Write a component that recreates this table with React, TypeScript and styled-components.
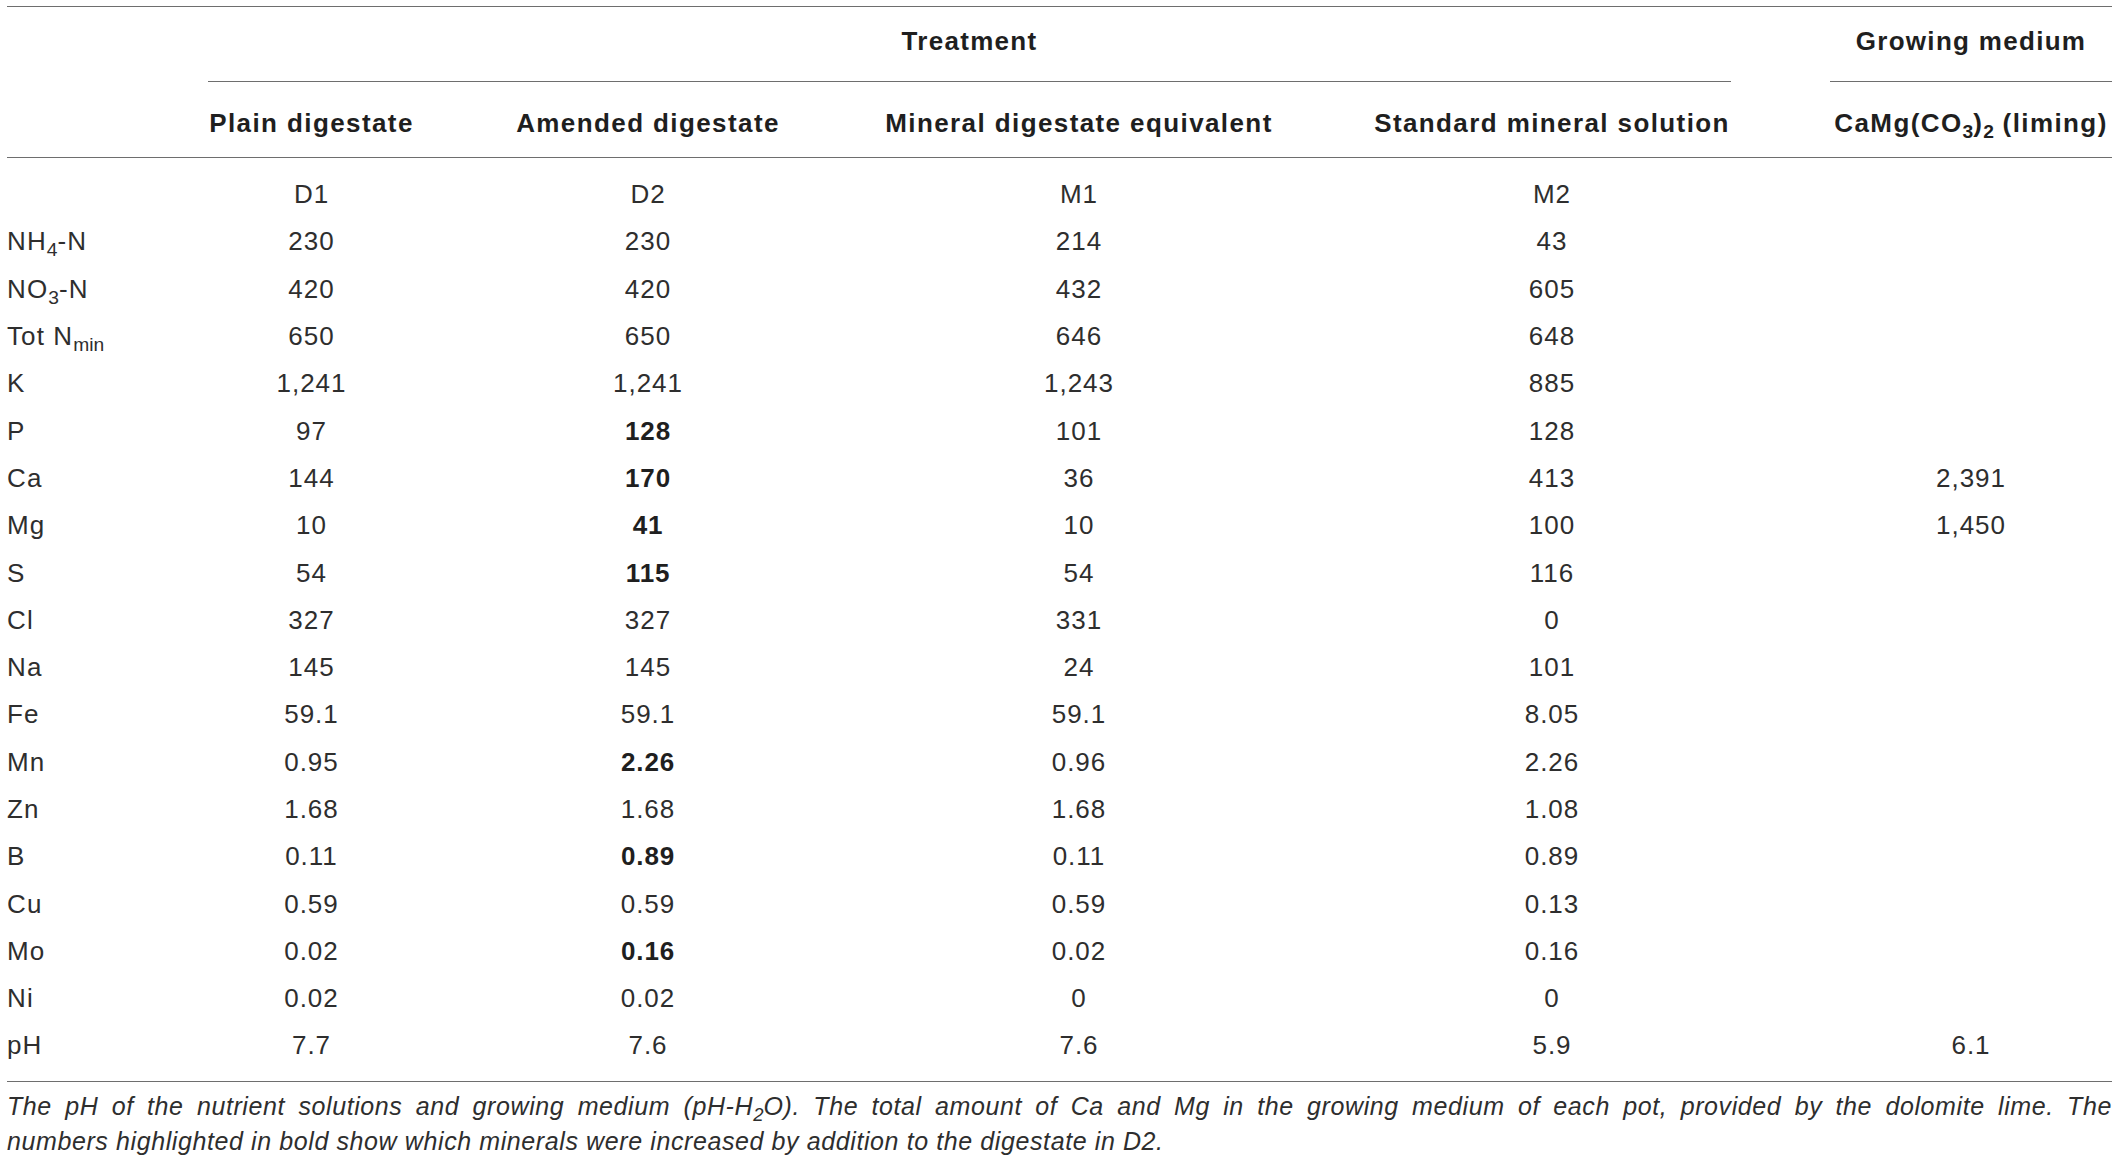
import React from "react";
import styled, { createGlobalStyle } from "styled-components";

const GlobalStyle = createGlobalStyle`
  html, body {
    margin: 0;
    padding: 0;
    background: #ffffff;
  }
  body {
    font-family: "Liberation Sans", Arial, sans-serif;
    color: #262626;
  }
`;

const COLS = "153px 303px 370px 492px 454px 333px";

const Page = styled.div`
  padding: 6px 6px 0 7px;
  width: 2105px;
`;

const Table = styled.div`
  display: flex;
  flex-direction: column;
  border-top: 1px solid #6e6e6e;
`;

const HeaderRow = styled.div<{ $height: number; $padTop?: number; $rule?: boolean }>`
  display: grid;
  grid-template-columns: ${COLS};
  height: ${(p) => p.$height}px;
  padding-top: ${(p) => p.$padTop ?? 0}px;
  box-sizing: border-box;
  align-items: center;
  border-bottom: ${(p) => (p.$rule ? "1px solid #6e6e6e" : "none")};
`;

const GroupCell = styled.div<{ $from: number; $to: number; $insetL: number; $insetR: number }>`
  grid-column: ${(p) => p.$from} / ${(p) => p.$to};
  align-self: stretch;
  display: flex;
  align-items: center;
  justify-content: center;
  margin-left: ${(p) => p.$insetL}px;
  margin-right: ${(p) => p.$insetR}px;
  padding-bottom: 5px;
  border-bottom: 1px solid #6e6e6e;
  font-weight: 700;
  font-size: 26px;
  letter-spacing: 1.3px;
  color: #1f1f1f;
`;

const ColHead = styled.div<{ $padLeft?: number }>`
  text-align: center;
  padding-left: ${(p) => p.$padLeft ?? 0}px;
  font-weight: 700;
  font-size: 26px;
  letter-spacing: 1.4px;
  color: #1f1f1f;
  white-space: nowrap;
`;

const Body = styled.div`
  display: flex;
  flex-direction: column;
  padding: 13px 0 11px;
  border-bottom: 1px solid #6e6e6e;
`;

const Row = styled.div`
  display: grid;
  grid-template-columns: ${COLS};
  height: 47.3px;
  align-items: center;
`;

const Label = styled.div`
  font-size: 26px;
  letter-spacing: 1.1px;
  color: #2e2e2e;
  white-space: nowrap;
`;

const Value = styled.div<{ $bold?: boolean; $padLeft?: number }>`
  text-align: center;
  padding-left: ${(p) => p.$padLeft ?? 0}px;
  font-size: 26px;
  font-weight: ${(p) => (p.$bold ? 700 : 400)};
  letter-spacing: ${(p) => (p.$bold ? "0.8px" : "1px")};
  color: ${(p) => (p.$bold ? "#1f1f1f" : "#2e2e2e")};
`;

const Sub = styled.sub`
  font-size: 0.74em;
  vertical-align: -0.3em;
  line-height: 0;
  letter-spacing: 0;
`;

const Caption = styled.div`
  padding-top: 7px;
  font-size: 25px;
  font-style: italic;
  line-height: 35px;
  letter-spacing: 0.6px;
  color: #2e2e2e;
`;

const CaptionLine = styled.div<{ $full?: boolean }>`
  text-align: ${(p) => (p.$full ? "justify" : "left")};
  text-align-last: ${(p) => (p.$full ? "justify" : "left")};
  white-space: nowrap;
`;

type Cell = string | { v: string; b: true };

const rows: { label: React.ReactNode; cells: Cell[] }[] = [
  { label: "", cells: ["D1", "D2", "M1", "M2", ""] },
  { label: <>NH<Sub>4</Sub>-N</>, cells: ["230", "230", "214", "43", ""] },
  { label: <>NO<Sub>3</Sub>-N</>, cells: ["420", "420", "432", "605", ""] },
  { label: <>Tot N<Sub>min</Sub></>, cells: ["650", "650", "646", "648", ""] },
  { label: "K", cells: ["1,241", "1,241", "1,243", "885", ""] },
  { label: "P", cells: ["97", { v: "128", b: true }, "101", "128", ""] },
  { label: "Ca", cells: ["144", { v: "170", b: true }, "36", "413", "2,391"] },
  { label: "Mg", cells: ["10", { v: "41", b: true }, "10", "100", "1,450"] },
  { label: "S", cells: ["54", { v: "115", b: true }, "54", "116", ""] },
  { label: "Cl", cells: ["327", "327", "331", "0", ""] },
  { label: "Na", cells: ["145", "145", "24", "101", ""] },
  { label: "Fe", cells: ["59.1", "59.1", "59.1", "8.05", ""] },
  { label: "Mn", cells: ["0.95", { v: "2.26", b: true }, "0.96", "2.26", ""] },
  { label: "Zn", cells: ["1.68", "1.68", "1.68", "1.08", ""] },
  { label: "B", cells: ["0.11", { v: "0.89", b: true }, "0.11", "0.89", ""] },
  { label: "Cu", cells: ["0.59", "0.59", "0.59", "0.13", ""] },
  { label: "Mo", cells: ["0.02", { v: "0.16", b: true }, "0.02", "0.16", ""] },
  { label: "Ni", cells: ["0.02", "0.02", "0", "0", ""] },
  { label: "pH", cells: ["7.7", "7.6", "7.6", "5.9", "6.1"] },
];

const LAST_PAD = 51;

export default function App() {
  return (
    <>
      <GlobalStyle />
      <Page>
        <Table>
          <HeaderRow $height={75}>
            <GroupCell $from={2} $to={6} $insetL={48} $insetR={48}>
              Treatment
            </GroupCell>
            <GroupCell $from={6} $to={7} $insetL={LAST_PAD} $insetR={0}>
              Growing medium
            </GroupCell>
          </HeaderRow>
          <HeaderRow $height={76} $padTop={7} $rule>
            <div />
            <ColHead>Plain digestate</ColHead>
            <ColHead>Amended digestate</ColHead>
            <ColHead>Mineral digestate equivalent</ColHead>
            <ColHead>Standard mineral solution</ColHead>
            <ColHead $padLeft={LAST_PAD}>
              CaMg(CO<Sub>3</Sub>)<Sub>2</Sub> (liming)
            </ColHead>
          </HeaderRow>
          <Body>
            {rows.map((r, i) => (
              <Row key={i}>
                <Label>{r.label}</Label>
                {r.cells.map((c, j) => {
                  const bold = typeof c !== "string";
                  const text = typeof c === "string" ? c : c.v;
                  return (
                    <Value key={j} $bold={bold} $padLeft={j === 4 ? LAST_PAD : 0}>
                      {text}
                    </Value>
                  );
                })}
              </Row>
            ))}
          </Body>
          <Caption>
            <CaptionLine $full>
              The pH of the nutrient solutions and growing medium (pH-H<Sub>2</Sub>O). The total amount of Ca and Mg in the growing medium of each pot, provided by the dolomite lime. The
            </CaptionLine>
            <CaptionLine>
              numbers highlighted in bold show which minerals were increased by addition to the digestate in D2.
            </CaptionLine>
          </Caption>
        </Table>
      </Page>
    </>
  );
}
